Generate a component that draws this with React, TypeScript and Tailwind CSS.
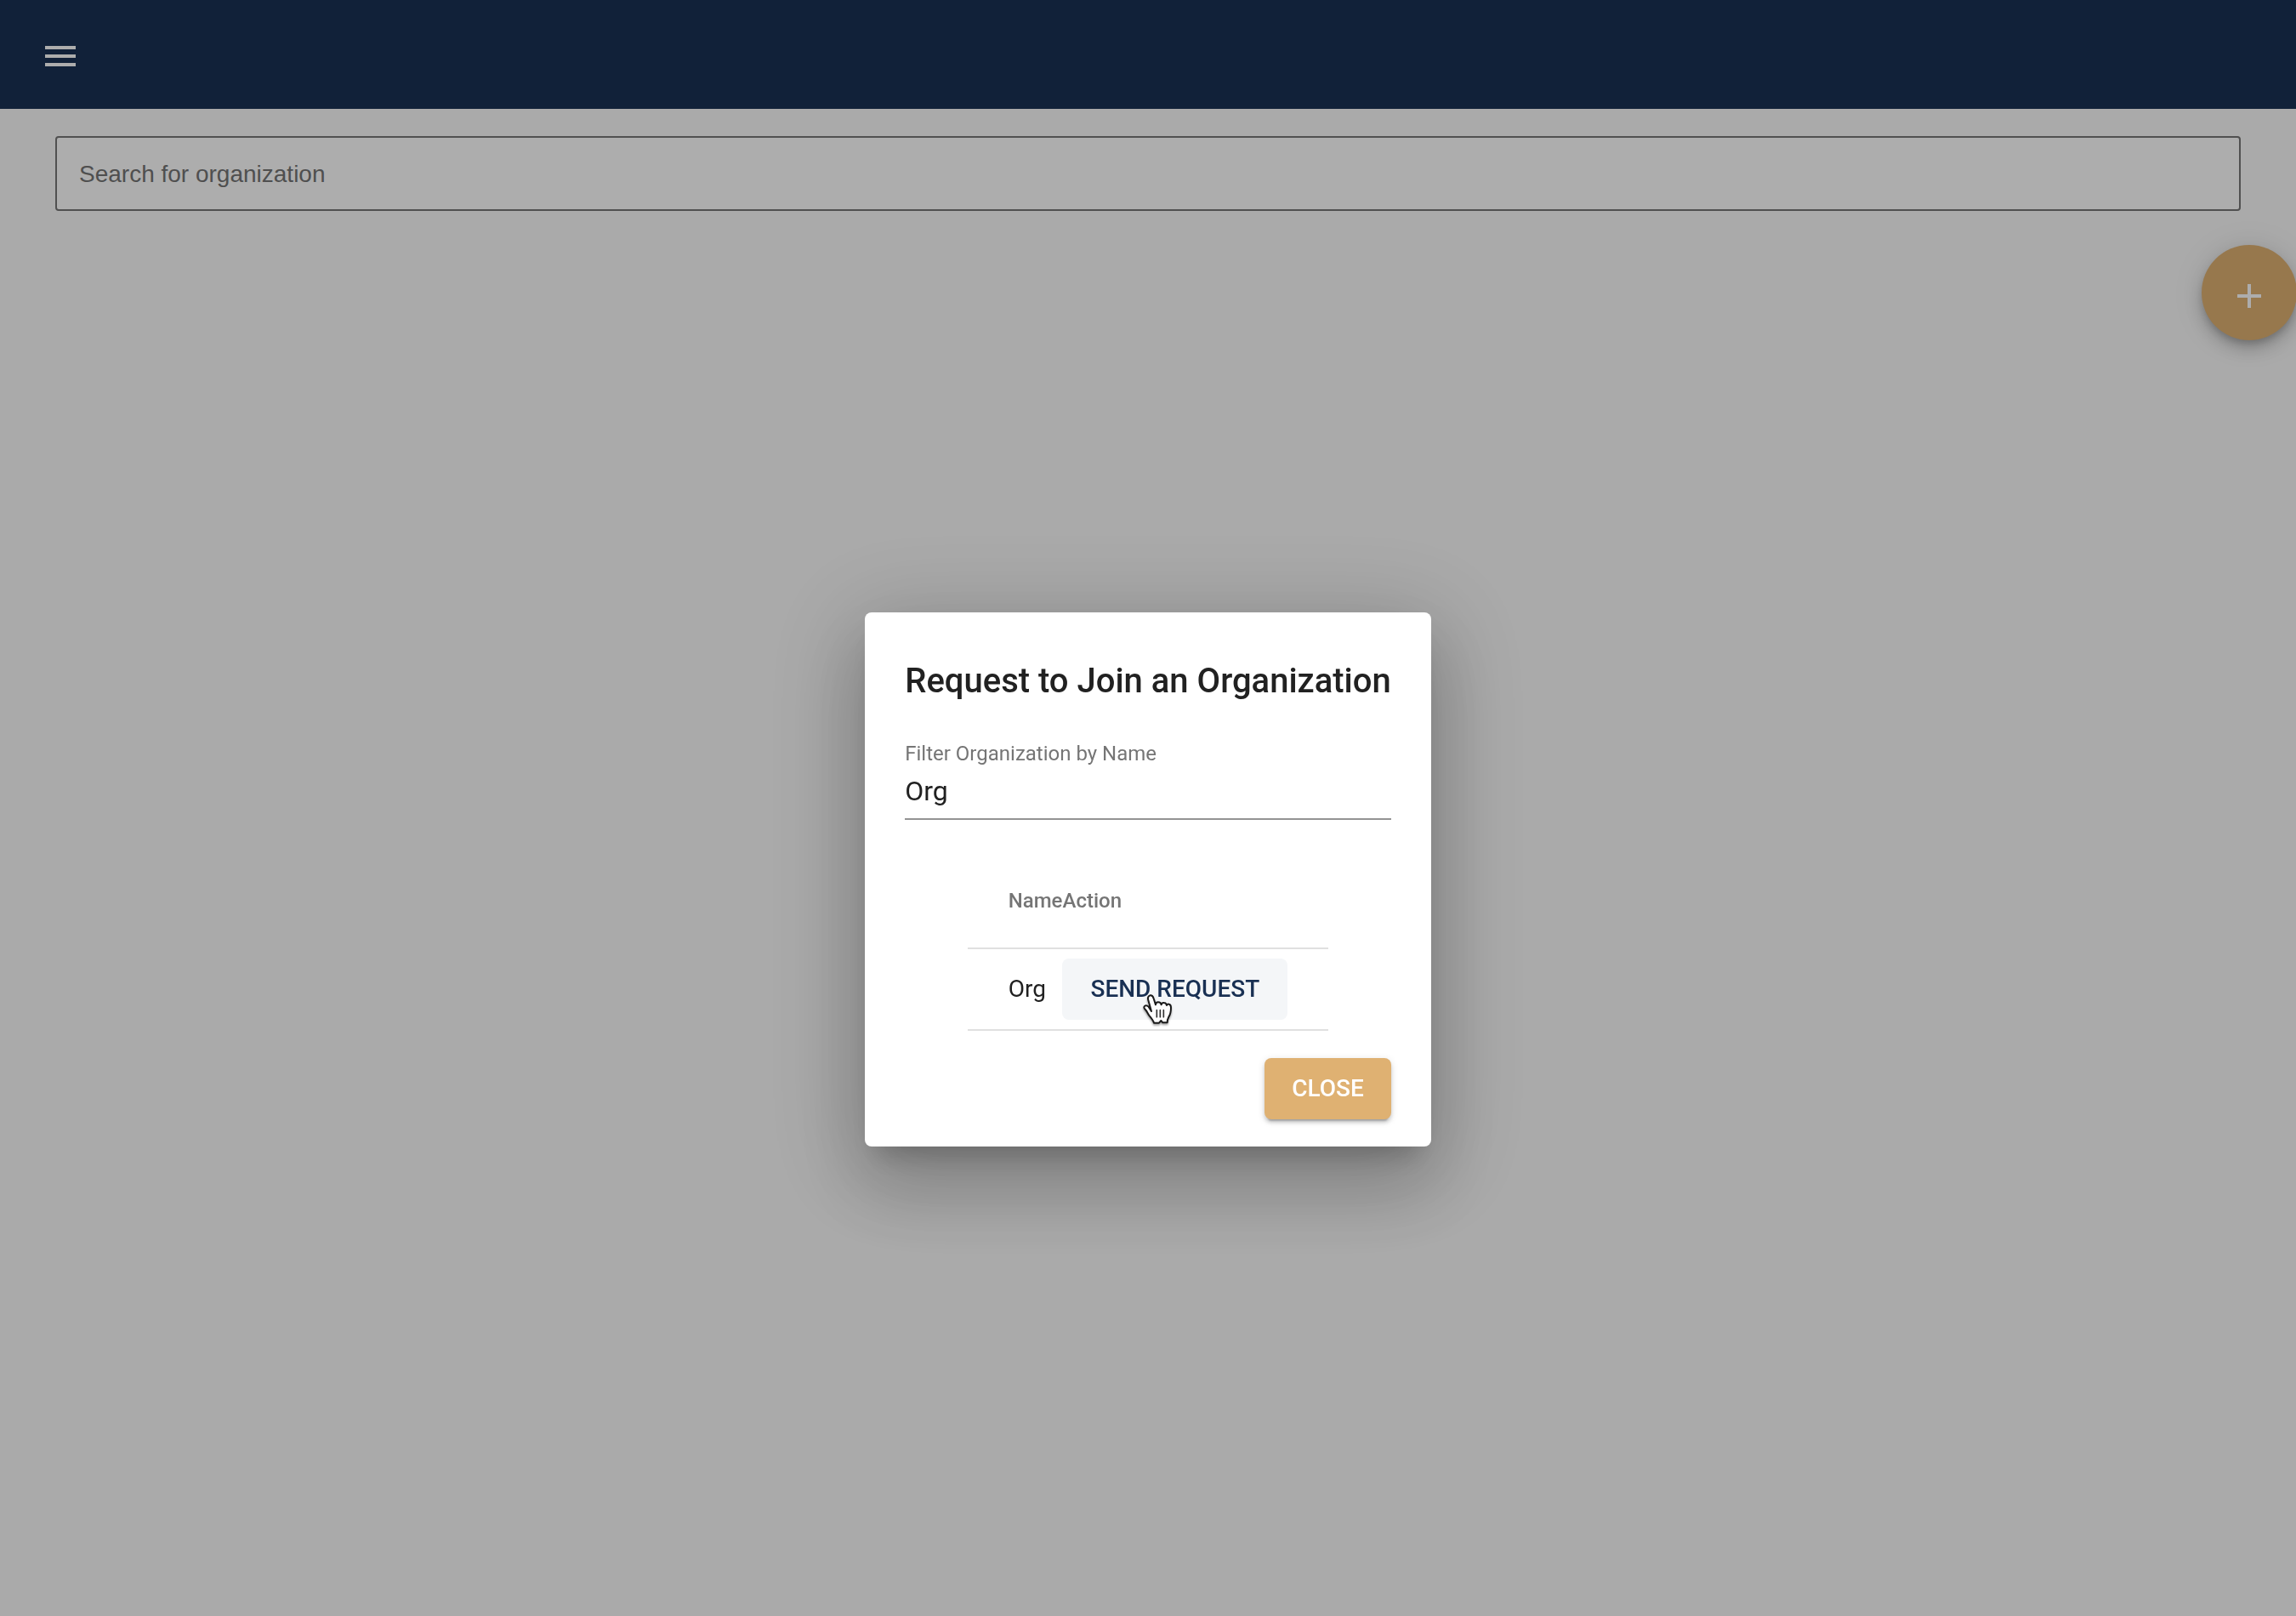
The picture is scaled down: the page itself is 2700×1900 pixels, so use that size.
import { useState } from "react";

const organizations = [{ id: 1, name: "Org" }];

function MenuIcon() {
  return (
    <svg viewBox="0 0 24 24" className="size-12" fill="currentColor" aria-hidden="true">
      <path d="M3 18h18v-2H3v2zm0-5h18v-2H3v2zm0-7v2h18V6H3z" />
    </svg>
  );
}

function AddIcon() {
  return (
    <svg viewBox="0 0 24 24" className="size-12" fill="currentColor" aria-hidden="true">
      <path d="M19 13h-6v6h-2v-6H5v-2h6V5h2v6h6v2z" />
    </svg>
  );
}

function HandPointer() {
  return (
    <svg
      viewBox="0 0 150 150"
      className="pointer-events-none absolute top-[33px] left-[86px] size-[50px] drop-shadow-[0_2px_1px_rgba(0,0,0,0.35)]"
      aria-hidden="true"
    >
      <path
        d="M57 87 46 48c-3-9 0-15 6-17 7-1 11 4 13 11l7 22c0-6 4-9 9-9 6 0 10 3 11 9 1-5 4-8 9-7 6 0 9 4 10 9 2-4 5-5 8-4 5 1 7 5 7 12 0 13-2 24-8 33-4 7-5 12-5 20H97l-6-7-7 8H66c-3-10-9-17-16-25-5-6-7-12-11-18-4-5-9-7-8-13 2-6 10-7 16-1z"
        fill="#fff"
        stroke="#1a1a1a"
        strokeWidth="6"
        strokeLinejoin="round"
      />
      <path d="M76 83v24M88 83v24M100 83v24" stroke="#333" strokeWidth="5" strokeLinecap="round" />
    </svg>
  );
}

function JoinDialog() {
  const [filter, setFilter] = useState("Org");
  const rows = organizations.filter((o) => o.name.toLowerCase().includes(filter.toLowerCase()));
  return (
    <div
      role="dialog"
      aria-modal="true"
      aria-labelledby="join-title"
      className="flex flex-col rounded-lg bg-white px-[47px] pt-12 pb-8 text-[#212121] shadow-[0_22px_30px_-14px_rgba(0,0,0,0.2),0_48px_84px_6px_rgba(0,0,0,0.15),0_18px_110px_20px_rgba(0,0,0,0.16)]"
    >
      <h2 id="join-title" className="text-[40px] leading-[66px] font-medium">
        Request to Join an Organization
      </h2>
      <label htmlFor="org-filter" className="mt-9 text-[24px] leading-8 text-[#757575]">
        Filter Organization by Name
      </label>
      <input
        id="org-filter"
        type="text"
        value={filter}
        onChange={(e) => setFilter(e.target.value)}
        className="mt-2.5 w-full border-b-2 border-[#949494] pb-3.5 text-[32px] leading-9 outline-none"
      />
      <table className="mt-[39px] self-center">
        <thead>
          <tr className="h-28 border-b-2 border-[#e0e0e0] text-left text-[24px] text-[#757575]">
            <th scope="col" className="pl-12 font-medium">Name</th>
            <th scope="col" className="pr-12 font-medium">Action</th>
          </tr>
        </thead>
        <tbody>
          {rows.map((org) => (
            <tr key={org.id} className="h-24 border-b-2 border-[#e0e0e0] text-[28px]">
              <td className="pl-12">{org.name}</td>
              <td className="pr-12">
                <div className="relative">
                  <button type="button" className="block h-18 rounded-lg bg-[#f4f6f8] px-[33px] font-medium text-[#193053]">
                    SEND REQUEST
                  </button>
                  <HandPointer />
                </div>
              </td>
            </tr>
          ))}
        </tbody>
      </table>
      <button
        type="button"
        className="mt-8 h-18 self-end rounded-lg bg-[#dfb172] px-8 text-[28px] font-medium text-white shadow-[0_6px_2px_-4px_rgba(0,0,0,0.2),0_4px_4px_0_rgba(0,0,0,0.14),0_2px_10px_0_rgba(0,0,0,0.12)]"
      >
        CLOSE
      </button>
    </div>
  );
}

export default function App() {
  return (
    <div className="min-h-screen overflow-x-hidden bg-[#fbfbfb] font-['Roboto',sans-serif]">
      <header className="flex h-32 items-center bg-[#1a3154] px-[47px] pt-1 text-white">
        <button type="button" aria-label="Open menu">
          <MenuIcon />
        </button>
      </header>
      <main className="flex flex-col pt-8">
        <div className="px-[65px]">
          <input
            type="search"
            aria-label="Search for organization"
            placeholder="Search for organization"
            className="h-22 w-full rounded border-2 border-[#767676] bg-white px-[26px] pt-0.5 font-['Liberation_Sans',Arial,sans-serif] text-[28px] placeholder:text-[#757575]"
          />
        </div>
        <button
          type="button"
          aria-label="Add organization"
          className="mt-10 -mr-px flex size-28 items-center justify-center self-end rounded-full bg-[#dfb172] pt-2 text-white shadow-[0_6px_10px_-2px_rgba(0,0,0,0.2),0_12px_20px_0_rgba(0,0,0,0.14),0_2px_36px_0_rgba(0,0,0,0.12)]"
        >
          <AddIcon />
        </button>
      </main>
      <div className="fixed inset-0 flex items-center justify-center bg-black/32 pt-[168px]">
        <JoinDialog />
      </div>
    </div>
  );
}
